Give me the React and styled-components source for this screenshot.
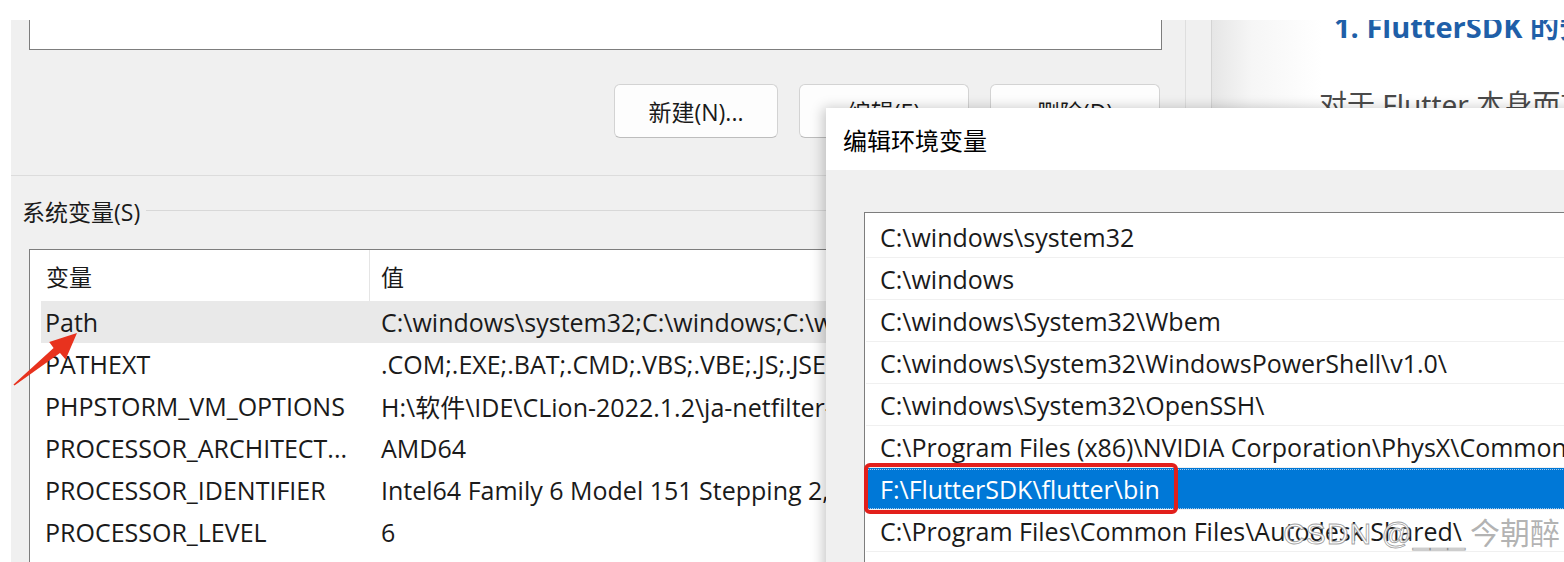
import React from "react";
import styled, { createGlobalStyle } from "styled-components";

const GlobalStyle = createGlobalStyle`
  html, body {
    margin: 0;
    padding: 0;
    background: #ffffff;
  }
  body {
    font-family: "Open Sans", "Noto Sans CJK SC", sans-serif;
    color: #1a1a1a;
  }
`;

const Page = styled.div`
  position: relative;
  width: 1564px;
  height: 562px;
  overflow: hidden;
  background: #ffffff;
  padding: 20px 0 0 11px;
  box-sizing: border-box;
  display: flex;
`;

const EnvWindow = styled.div`
  width: 1201px;
  flex-shrink: 0;
  display: flex;
  background: #f0f0f0;
  border-right: 1px solid #d4d4d4;
  box-sizing: border-box;
`;

const EnvContent = styled.div`
  width: 1175px;
  border-right: 1px solid #dedede;
  box-sizing: border-box;
  display: flex;
  flex-direction: column;
`;

const UserList = styled.div`
  margin-left: 18px;
  width: 1133px;
  height: 30px;
  flex-shrink: 0;
  background: #ffffff;
  border: 1px solid #7d7d7d;
  border-top: none;
  box-sizing: border-box;
`;

const ButtonRow = styled.div`
  display: flex;
  justify-content: flex-end;
  gap: 21px;
  margin-top: 34px;
  padding-right: 25px;
`;

const Button = styled.div`
  width: ${(p) => p.$w || 168}px;
  height: 54px;
  box-sizing: border-box;
  display: flex;
  align-items: center;
  justify-content: center;
  background: #fdfdfd;
  border: 1px solid #d3d3d3;
  border-bottom-color: #bdbdbd;
  border-radius: 6px;
  font-size: 23px;
  color: #1a1a1a;
`;

const Divider = styled.div`
  margin-top: 37px;
  height: 1px;
  flex-shrink: 0;
  background: #dcdcdc;
`;

const GroupHead = styled.div`
  display: flex;
  align-items: center;
  gap: 6px;
  margin-top: 21px;
  padding-left: 11px;
  font-size: 23px;
  line-height: 30px;

  &::after {
    content: "";
    flex: 1;
    height: 1px;
    margin-top: -4px;
    background: #d8d8d8;
  }
`;

const SysList = styled.div`
  margin-top: 22px;
  margin-left: 18px;
  flex: 1;
  background: #ffffff;
  border-left: 1px solid #7d7d7d;
  border-top: 1px solid #7d7d7d;
`;

const HeaderRow = styled.div`
  display: flex;
  height: 51px;
  font-size: 23px;
`;

const HeaderCell = styled.div`
  display: flex;
  align-items: center;
  width: ${(p) => (p.$w ? `${p.$w}px` : "auto")};
  padding-left: ${(p) => p.$pad}px;
  box-sizing: border-box;
  border-right: ${(p) => (p.$w ? "1px solid #e5e5e5" : "none")};
`;

const VarRow = styled.div`
  display: grid;
  grid-template-columns: 336px 1fr;
  height: 42px;
  margin-left: 11px;
  align-items: center;
  font-size: 25px;
  white-space: nowrap;
  background: ${(p) => (p.$hover ? "#e9e9e9" : "transparent")};

  span {
    padding-left: 4px;
    overflow: hidden;
  }
`;

const Gutter = styled.div`
  width: 25px;
`;

const Blog = styled.div`
  flex: 1;
  overflow: hidden;
  background: linear-gradient(to right, #e6e6e6 0px, #f6f6f6 40px, #ffffff 110px);
`;

const BlogTitle = styled.div`
  margin-top: -13px;
  padding-left: 122px;
  font-family: "Open Sans", "Noto Sans CJK SC", sans-serif;
  font-weight: 700;
  font-size: 29px;
  line-height: 40px;
  color: #1f5fa8;
  white-space: nowrap;
`;

const BlogText = styled.div`
  margin-top: 40px;
  padding-left: 107px;
  font-family: "Noto Sans", "Noto Sans CJK SC", sans-serif;
  font-size: 28px;
  line-height: 34px;
  color: #4a4a4a;
  white-space: nowrap;
`;

const EditWindow = styled.div`
  position: absolute;
  left: 826px;
  top: 108px;
  width: 760px;
  height: 470px;
  overflow: hidden;
  background: #f0f0f0;
  box-shadow: -3px 0 12px rgba(0, 0, 0, 0.22);
  display: flex;
  flex-direction: column;
`;

const TitleBar = styled.div`
  height: 62px;
  flex-shrink: 0;
  background: #ffffff;
  display: flex;
  align-items: center;
  padding-left: 17px;
  font-size: 24px;
  color: #000;
`;

const EditBody = styled.div`
  flex: 1;
  min-height: 0;
  padding: 42px 0 0 38px;
  display: flex;
`;

const PathList = styled.div`
  flex: 1;
  background: #ffffff;
  border-left: 1px solid #7d7d7d;
  border-top: 1px solid #7d7d7d;
  padding-top: 3px;
`;

const PathRow = styled.div`
  height: 42px;
  box-sizing: border-box;
  display: flex;
  align-items: center;
  margin-left: 1px;
  padding-left: 14px;
  font-size: 25px;
  white-space: nowrap;
  overflow: hidden;
  border-bottom: 1px solid #f0f0f0;
  background: ${(p) => (p.$selected ? "#0078d7" : "transparent")};
  color: ${(p) => (p.$selected ? "#ffffff" : "#1a1a1a")};
  outline: ${(p) => (p.$selected ? "1px dotted #9cc8ee" : "none")};
  outline-offset: -2px;
`;

const Highlight = styled.div`
  position: absolute;
  left: 864px;
  top: 463px;
  width: 314px;
  height: 51px;
  box-sizing: border-box;
  border: 4px solid #e21f1b;
  border-radius: 6px;
`;

const Arrow = styled.svg`
  position: absolute;
  left: 8px;
  top: 328px;
`;

const Watermark = styled.div`
  position: absolute;
  right: 4px;
  top: 516px;
  display: flex;
  align-items: baseline;
  font-family: "Liberation Sans", "Noto Sans CJK SC", sans-serif;
  font-size: 30px;
  line-height: 36px;
  white-space: nowrap;
  color: rgba(165, 165, 165, 0.85);
  text-shadow: 0 0 1px rgba(255, 255, 255, 0.9);
`;

const WatermarkSite = styled.span`
  letter-spacing: 1px;
  margin-right: 4px;
  color: rgba(255, 255, 255, 0.6);
  -webkit-text-stroke: 0.9px rgba(110, 110, 110, 0.65);
`;

const sysVars = [
  ["Path", "C:\\windows\\system32;C:\\windows;C:\\windows\\System32\\Wbem", true],
  ["PATHEXT", ".COM;.EXE;.BAT;.CMD;.VBS;.VBE;.JS;.JSE;.WSF;.WSH;.MSC"],
  ["PHPSTORM_VM_OPTIONS", "H:\\软件\\IDE\\CLion-2022.1.2\\ja-netfilter-all\\vmoptions"],
  ["PROCESSOR_ARCHITECT...", "AMD64"],
  ["PROCESSOR_IDENTIFIER", "Intel64 Family 6 Model 151 Stepping 2, GenuineIntel"],
  ["PROCESSOR_LEVEL", "6"],
];

const paths = [
  "C:\\windows\\system32",
  "C:\\windows",
  "C:\\windows\\System32\\Wbem",
  "C:\\windows\\System32\\WindowsPowerShell\\v1.0\\",
  "C:\\windows\\System32\\OpenSSH\\",
  "C:\\Program Files (x86)\\NVIDIA Corporation\\PhysX\\Common",
  "F:\\FlutterSDK\\flutter\\bin",
  "C:\\Program Files\\Common Files\\Autodesk Shared\\",
  "C:\\Program Files\\Microsoft SQL Server\\150\\Tools\\Binn\\",
];

export default function App() {
  return (
    <>
      <GlobalStyle />
      <Page>
        <EnvWindow>
          <EnvContent>
            <UserList />
            <ButtonRow>
              <Button $w={164}>新建(N)...</Button>
              <Button $w={170}>编辑(E)</Button>
              <Button $w={170}>删除(D)</Button>
            </ButtonRow>
            <Divider />
            <GroupHead>系统变量(S)</GroupHead>
            <SysList>
              <HeaderRow>
                <HeaderCell $w={340} $pad={16}>变量</HeaderCell>
                <HeaderCell $pad={11}>值</HeaderCell>
              </HeaderRow>
              {sysVars.map(([name, value, hover]) => (
                <VarRow key={name} $hover={hover}>
                  <span>{name}</span>
                  <span>{value}</span>
                </VarRow>
              ))}
            </SysList>
          </EnvContent>
          <Gutter />
        </EnvWindow>
        <Blog>
          <BlogTitle>1. FlutterSDK 的安装</BlogTitle>
          <BlogText>对于 Flutter 本身而言</BlogText>
        </Blog>

        <EditWindow>
          <TitleBar>编辑环境变量</TitleBar>
          <EditBody>
            <PathList>
              {paths.map((p, i) => (
                <PathRow key={p} $selected={i === 6}>
                  {p}
                </PathRow>
              ))}
            </PathList>
          </EditBody>
        </EditWindow>

        <Highlight />
        <Arrow width="78" height="64" viewBox="0 0 78 64">
          <polygon
            points="5.5,56.4 45.6,20 41.2,14 69,5 57.6,31.5 52,25 6.5,57.6"
            fill="#e8321e"
          />
        </Arrow>
        <Watermark>
          <WatermarkSite>CSDN @___</WatermarkSite>
          今朝醉
        </Watermark>
      </Page>
    </>
  );
}
